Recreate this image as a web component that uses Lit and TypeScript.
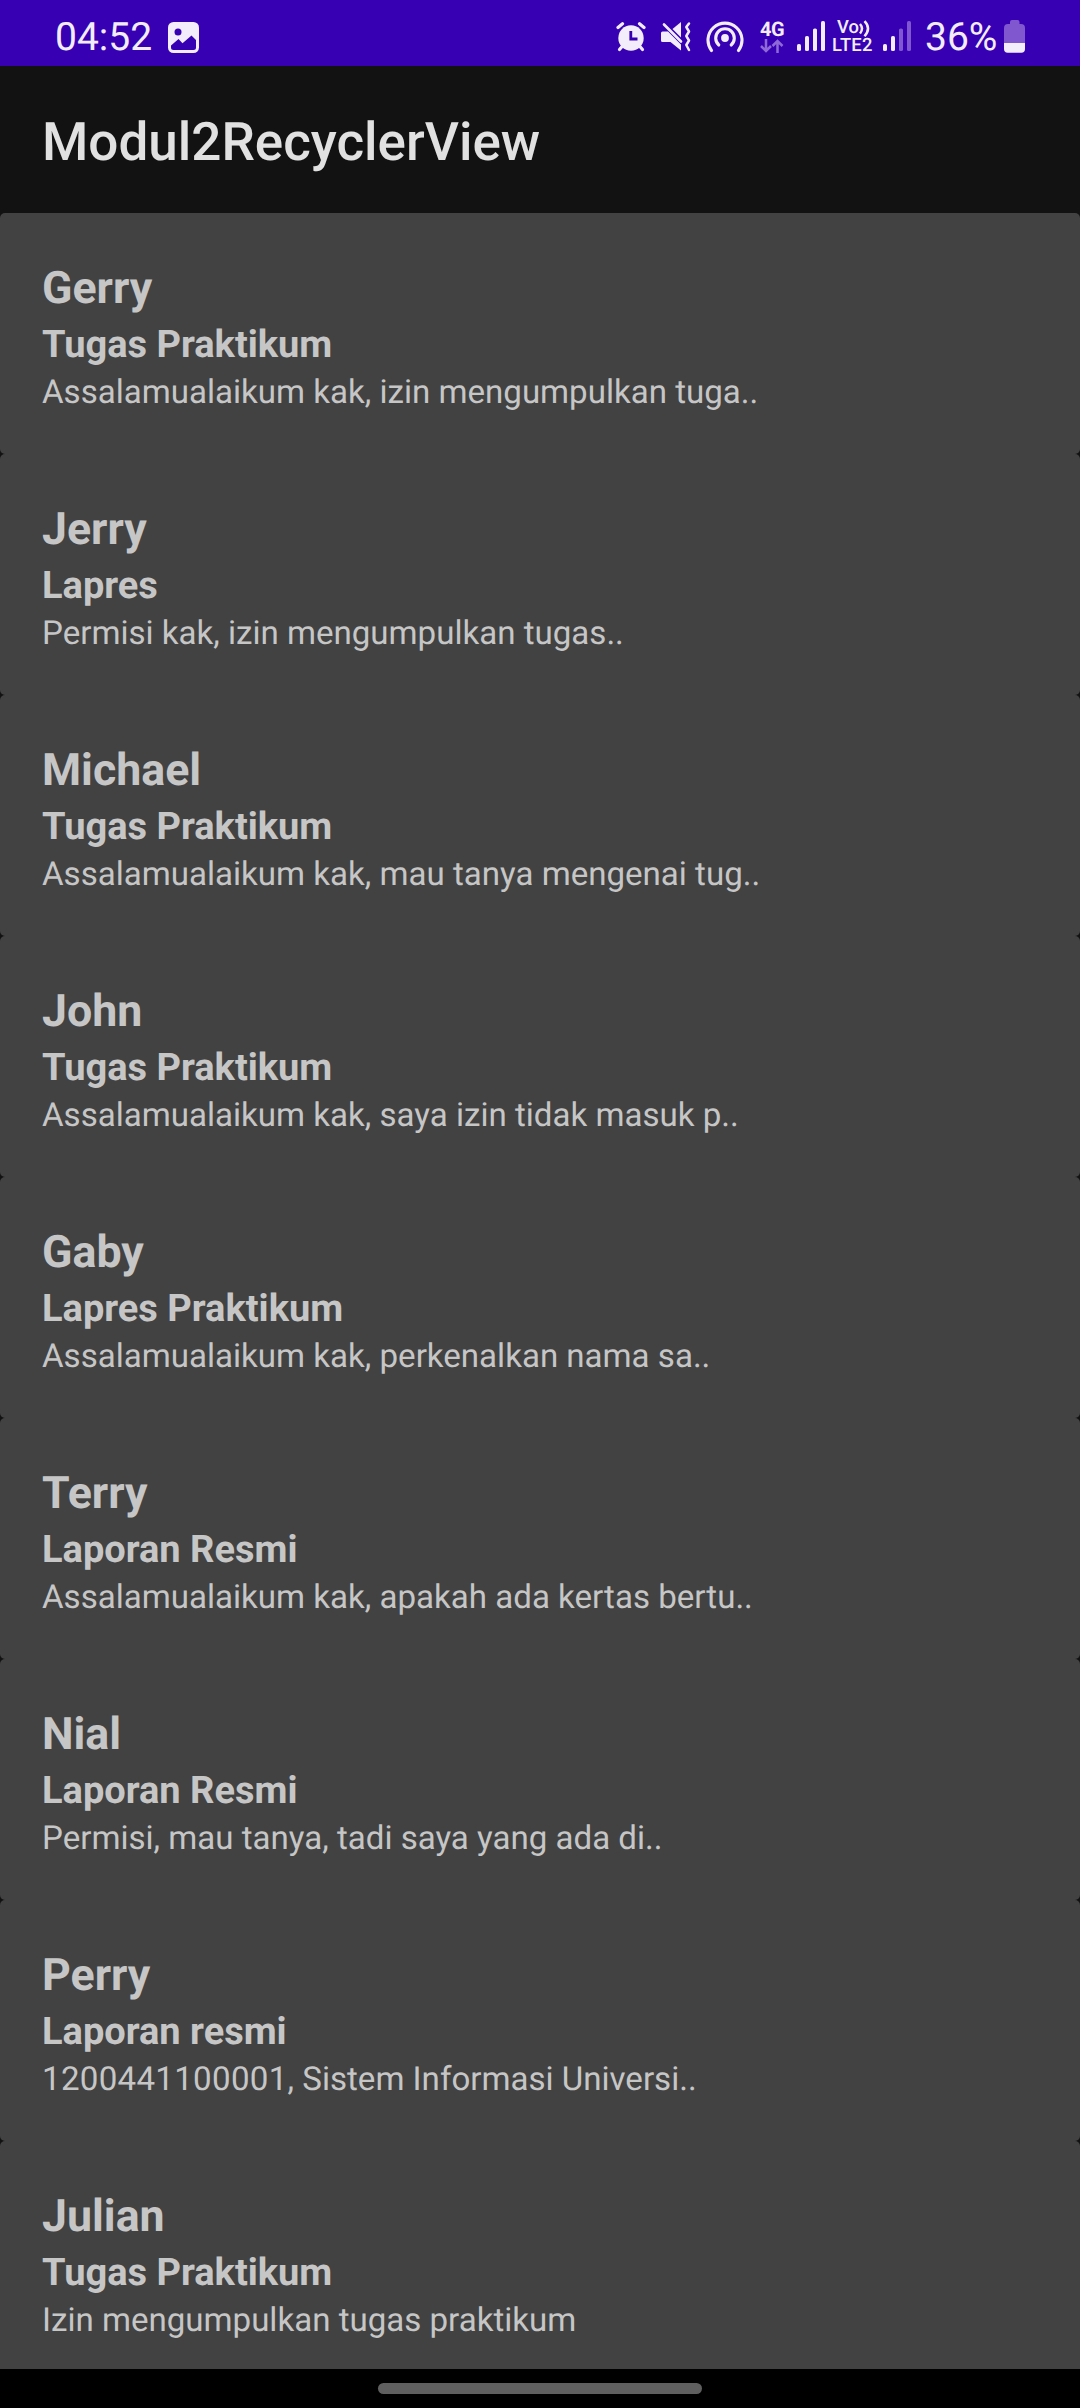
import { LitElement, html, css, svg } from "lit";
import { customElement, property } from "lit/decorators.js";

interface Message {
  name: string;
  subject: string;
  preview: string;
}

const MESSAGES: Message[] = [
  { name: "Gerry", subject: "Tugas Praktikum", preview: "Assalamualaikum kak, izin mengumpulkan tuga.." },
  { name: "Jerry", subject: "Lapres", preview: "Permisi kak, izin mengumpulkan tugas.." },
  { name: "Michael", subject: "Tugas Praktikum", preview: "Assalamualaikum kak, mau tanya mengenai tug.." },
  { name: "John", subject: "Tugas Praktikum", preview: "Assalamualaikum kak, saya izin tidak masuk p.." },
  { name: "Gaby", subject: "Lapres Praktikum", preview: "Assalamualaikum kak, perkenalkan nama sa.." },
  { name: "Terry", subject: "Laporan Resmi", preview: "Assalamualaikum kak, apakah ada kertas bertu.." },
  { name: "Nial", subject: "Laporan Resmi", preview: "Permisi, mau tanya, tadi saya yang ada di.." },
  { name: "Perry", subject: "Laporan resmi", preview: "1200441100001, Sistem Informasi Universi.." },
  { name: "Julian", subject: "Tugas Praktikum", preview: "Izin mengumpulkan tugas praktikum" },
];

@customElement("signal-bars")
class SignalBars extends LitElement {
  @property({ type: Number }) level = 4;

  static styles = css`
    :host { display: block; width: 28px; height: 30px; }
    svg { display: block; fill: #f3edfb; }
    .dim { fill: #8157d0; }
  `;

  render() {
    return html`<svg width="28" height="30" viewBox="0 0 28 30">
      ${[7, 15, 22.5, 30].map(
        (h, i) => svg`<rect class=${i < this.level ? "on" : "dim"} x=${i * 8} y=${30 - h} width="4" height=${h} rx="1.6" />`
      )}
    </svg>`;
  }
}

@customElement("status-bar")
class StatusBar extends LitElement {
  static styles = css`
    :host {
      display: flex;
      align-items: flex-start;
      box-sizing: border-box;
      height: 66px;
      padding: 0 55px 0 55px;
      background: #3700b3;
      color: #f3edfb;
      font-family: Roboto, sans-serif;
    }
    svg { display: block; flex: none; }
    .clock, .percent { font-size: 39px; line-height: 46px; margin-top: 14px; white-space: nowrap; }
    .clock { width: 98px; }
    .percent { width: 74px; margin-left: 14px; }
    .picture { margin: 22px 0 0 15px; }
    .spacer { flex: 1; }
    .alarm { margin: 22px 15px 0 0; }
    .mute { margin: 21px 14px 0 0; }
    .hotspot { margin: 19px 16px 0 0; }
    .network { width: 25px; margin: 20px 12px 0 0; font-size: 20px; font-weight: 700; line-height: 18px; letter-spacing: -0.4px; }
    .network svg { margin-top: 1px; }
    .volte { width: 42px; margin: 19px 9px 0 7px; font-weight: 500; font-size: 18.4px; line-height: 18px; white-space: nowrap; }
    .vo { display: flex; padding-left: 5px; }
    .lte { letter-spacing: 0.2px; }
    signal-bars { margin-top: 21px; }
    .battery { margin: 20px 0 0 5px; }
  `;

  render() {
    return html`
      <div class="clock">04:52</div>
      <svg class="picture" width="31" height="31" viewBox="0 0 31 31">
        <rect width="31" height="31" rx="5.5" fill="#f3edfb" />
        <circle cx="10" cy="10" r="3.5" fill="#3700b3" />
        <path d="M3 23.500L10.500 17l4 4.200L23.500 13.500l4.500 4.500v7.500q0 2.500-2.500 2.500h-20Q3 28 3 25.500z" fill="#3700b3" />
      </svg>
      <div class="spacer"></div>
      <svg class="alarm" width="30" height="30" viewBox="0 0 30 30">
        <g fill="none" stroke="#f3edfb" stroke-linecap="round">
          <path d="M2 5.500L6.500 1.800M28 5.500L23.500 1.800" stroke-width="3.200" />
          <path d="M6.500 24L3.500 27.500M23.500 24l3 3.500" stroke-width="3.200" />
        </g>
        <circle cx="15" cy="16" r="12.700" fill="#f3edfb" />
        <path d="M14.800 9v8h6.700" fill="none" stroke="#3700b3" stroke-width="2.800" />
      </svg>
      <svg class="mute" width="31" height="32" viewBox="0 0 31 32">
        <path d="M0 12q0-1.500 1.500-1.500H7L20 23.500v6L9.500 21H1.500Q0 21 0 19.500z" fill="#f3edfb" />
        <path d="M20 1v15.500l-8.500-8.500z" fill="#f3edfb" />
        <path d="M3 3.500L20 20.500" stroke="#f3edfb" stroke-width="2.600" stroke-linecap="round" />
        <path d="M28 2.500L25.300 6L28 10.500L25.300 15L28 19.500L25.300 24L28 29" fill="none" stroke="#f3edfb" stroke-width="2.500" stroke-linecap="round" stroke-linejoin="round" />
      </svg>
      <svg class="hotspot" width="38" height="34" viewBox="0 0 38 34">
        <circle cx="19" cy="19" r="3.900" fill="#f3edfb" />
        <g fill="none" stroke="#f3edfb" stroke-width="3.100" stroke-linecap="round">
          <path d="M12.800 26A9.300 9.300 0 1 1 25.200 26" />
          <path d="M5.500 31.500A17 17 0 1 1 32.500 31.500" />
        </g>
      </svg>
      <div class="network">
        4G
        <svg width="24" height="14" viewBox="0 0 24 14" fill="none" stroke="#8f69d8" stroke-width="2.500">
          <path d="M6 0v12M1 7l5 5 5-5M17.500 14V2M12.500 7l5-5 5 5" />
        </svg>
      </div>
      <signal-bars level="4"></signal-bars>
      <div class="volte">
        <div class="vo">Vo<svg width="11" height="18" viewBox="0 0 11 18" fill="none" stroke="#f3edfb" stroke-width="2.500">
          <path d="M1 5q4 4.500 0 9.500M5.500 2.200q7 7 0 15" />
        </svg></div>
        <div class="lte">LTE2</div>
      </div>
      <signal-bars level="2"></signal-bars>
      <div class="percent">36%</div>
      <svg class="battery" width="21" height="33" viewBox="0 0 21 33">
        <path d="M6 4V2q0-2 2-2h5.500q2 0 2 2v2H17q4 0 4 4v15H0V8q0-4 4-4z" fill="#8157d0" />
        <path d="M0 23h21v6q0 3.700-3.700 3.700H3.700Q0 32.700 0 29z" fill="#f3edfb" />
      </svg>
    `;
  }
}

@customElement("message-card")
class MessageCard extends LitElement {
  @property({ attribute: false }) message!: Message;

  static styles = css`
    :host {
      display: block;
      box-sizing: border-box;
      flex: none;
      height: 241px;
      padding: 45px 42px 0;
      border-radius: 5px;
      background: #424242;
      color: #c6c6c6;
      white-space: nowrap;
    }
    .name { font-size: 44.7px; font-weight: 700; line-height: 60px; }
    .subject { font-size: 38px; font-weight: 700; line-height: 54px; }
    .preview { font-size: 33.1px; font-weight: 400; line-height: 42px; }
    .digits { letter-spacing: 0.3px; }
  `;

  render() {
    // Digit runs are set slightly looser than the surrounding words.
    const parts = this.message.preview.split(/(\d+)/).filter((part) => part !== "");
    return html`
      <div class="name">${this.message.name}</div>
      <div class="subject">${this.message.subject}</div>
      <div class="preview">${parts.map((part) => (/^\d/.test(part) ? html`<span class="digits">${part}</span>` : part))}</div>
    `;
  }
}

@customElement("app-root")
class AppRoot extends LitElement {
  static styles = css`
    :host {
      display: flex;
      flex-direction: column;
      width: 1080px;
      height: 2408px;
      overflow: hidden;
      background: #121212;
      font-family: Roboto, sans-serif;
      text-rendering: geometricPrecision;
    }
    .toolbar {
      display: flex;
      align-items: center;
      flex: none;
      height: 147px;
      padding: 4px 42px 0;
      box-sizing: border-box;
      color: #e1e1e1;
      font-size: 53px;
      font-weight: 500;
    }
    .list { display: flex; flex-direction: column; height: 2156px; flex: none; overflow: hidden; }
    .navigation { display: flex; justify-content: center; flex: 1; background: #000; }
    .handle { width: 324px; height: 11px; margin-top: 14px; border-radius: 6px; background: #5f5f5f; }
  `;

  render() {
    return html`
      <status-bar></status-bar>
      <div class="toolbar">Modul2RecyclerView</div>
      <div class="list">
        ${MESSAGES.map((m) => html`<message-card .message=${m}></message-card>`)}
      </div>
      <div class="navigation"><div class="handle"></div></div>
    `;
  }
}
